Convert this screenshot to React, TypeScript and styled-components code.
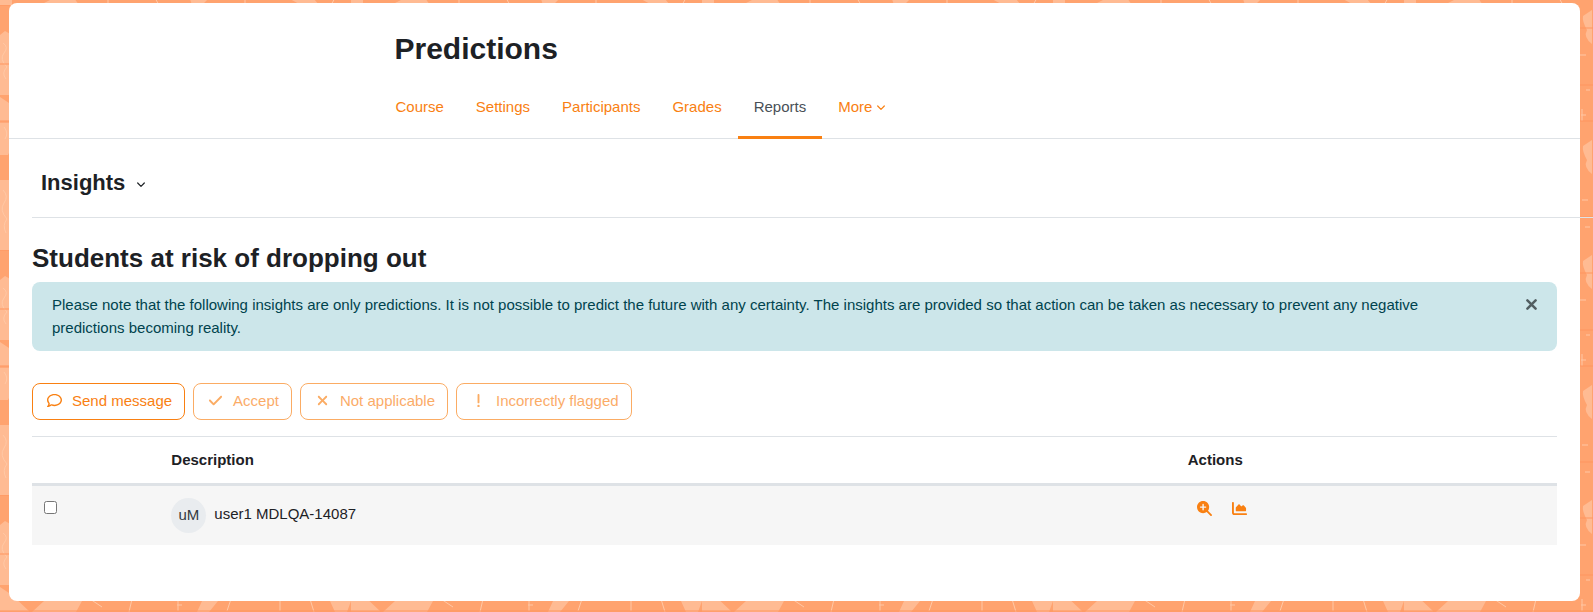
import React from "react";
import styled, { createGlobalStyle, css } from "styled-components";
import { FaRegComment, FaCheck, FaXmark, FaExclamation, FaMagnifyingGlassPlus, FaChartArea } from "react-icons/fa6";

const ORANGE = "#f98012";
const INK = "#1d2125";
const LINE = "#dee2e6";

const GlobalStyle = createGlobalStyle`
  *, *::before, *::after { box-sizing: border-box; }
  body {
    margin: 0;
    overflow-x: hidden;
    background: #ffa36f;
    color: ${INK};
    font-family: "Liberation Sans", Arial, sans-serif;
    font-size: 15px;
    line-height: 23px;
  }
  h1, h2, p { margin: 0; font-weight: 700; }
`;

const Page = styled.div`
  position: relative;
  min-height: 100vh;
  padding: 3px 13px 11px 9px;
  display: flex;
  isolation: isolate;
  overflow: hidden;
`;

const Backdrop = styled.svg`
  position: absolute;
  inset: 0;
  width: 100%;
  height: 100%;
  z-index: -1;
`;

const Card = styled.main`
  flex: 1;
  min-width: 0;
  border-radius: 8px;
  background: #fff;
`;

const Centered = styled.div`
  width: 100%;
  max-width: 832px;
  margin: 0 auto;
  padding: 0 16px;
`;

const Header = styled.header`
  border-bottom: 1px solid ${LINE};
`;

const Title = styled.h1`
  padding: 28px 0 25px;
  font-size: 30px;
  line-height: 36px;
`;

const Tabs = styled.nav`
  display: flex;
  margin: 0 -15px -1px;
`;

const Tab = styled.a<{ $active?: boolean }>`
  display: flex;
  align-items: center;
  gap: 5px;
  height: 47px;
  padding: 0 16px 16px;
  color: ${(p) => (p.$active ? "#495057" : ORANGE)};
  border-bottom: 3px solid ${(p) => (p.$active ? ORANGE : "transparent")};
  text-decoration: none;
  svg { margin-top: 4px; }
`;

const Content = styled.div`
  padding: 24px 23px 48px;
`;

const SectionBar = styled.div`
  display: flex;
  margin-right: -40px;
  padding: 0 9px 15px;
  border-bottom: 1px solid ${LINE};
`;

const SectionToggle = styled.button`
  display: flex;
  align-items: center;
  gap: 12px;
  height: 39px;
  padding: 0;
  border: 0;
  background: none;
  color: ${INK};
  font: 700 22px/28px "Liberation Sans", Arial, sans-serif;
  cursor: pointer;
  svg { margin-top: 4px; }
`;

const Heading = styled.h2`
  padding: 24px 0 8px;
  font-size: 26px;
  line-height: 32px;
`;

const Notice = styled.div`
  display: flex;
  align-items: flex-start;
  padding: 11px 20px 12px;
  border-radius: 8px;
  background: #cce6ea;
  color: #00434e;
`;

const NoticeText = styled.p`
  flex: 1;
  padding-right: 64px;
  font-weight: 400;
`;

const CloseButton = styled.button`
  display: flex;
  padding: 6px 0;
  border: 0;
  background: none;
  color: #525e61;
  cursor: pointer;
`;

const Toolbar = styled.div`
  display: flex;
  gap: 8px;
  padding: 32px 0 16px;
`;

const ActionButton = styled.button`
  display: flex;
  align-items: center;
  height: 37px;
  padding: 0 12px 2px;
  border: 1px solid ${ORANGE};
  border-radius: 8px;
  background: #fff;
  color: ${ORANGE};
  font: 400 15px/23px "Liberation Sans", Arial, sans-serif;
  cursor: pointer;
  &:disabled { opacity: 0.65; cursor: default; }
`;

const IconSlot = styled.span`
  display: flex;
  justify-content: center;
  width: 19px;
  margin-right: 8px;
`;

const Table = styled.table`
  width: 100%;
  border-collapse: separate;
  border-spacing: 0;
  table-layout: fixed;
`;

const cell = css`
  padding: 12px;
  text-align: left;
  vertical-align: top;
`;

const HeadCell = styled.th<{ $width?: string }>`
  ${cell}
  width: ${(p) => p.$width ?? "auto"};
  padding-top: 11px;
  border-top: 1px solid ${LINE};
  border-bottom: 3px solid ${LINE};
`;

const Cell = styled.td`
  ${cell}
  background: #f6f6f6;
`;

const Checkbox = styled.input`
  display: block;
  width: 13px;
  height: 13px;
  margin: 3px 0 0;
`;

const User = styled.div`
  display: flex;
  gap: 8px;
  line-height: 32px;
`;

const Avatar = styled.span`
  width: 35px;
  height: 35px;
  border-radius: 50%;
  background: #e9ecef;
  color: #343a40;
  line-height: 34px;
  text-align: center;
`;

const RowActions = styled.div`
  display: flex;
  gap: 20px;
  padding: 3px 0 0 9px;
`;

const IconLink = styled.a`
  display: flex;
  color: ${ORANGE};
`;

const Chevron = () => (
  <svg width="8" height="6" viewBox="0 0 8 6" fill="none" stroke="currentColor" strokeWidth="1.2" strokeLinecap="round" strokeLinejoin="round" aria-hidden="true">
    <path d="M.7 1L4 4.4 7.3 1" />
  </svg>
);

const Cross = () => (
  <svg width="11" height="11" viewBox="0 0 11 11" stroke="currentColor" strokeWidth="2.5" strokeLinecap="round" aria-hidden="true">
    <path d="M1.4 1.4l8.2 8.2M9.6 1.4L1.4 9.6" />
  </svg>
);

const Texture = () => (
  <Backdrop aria-hidden="true">
    <defs>
      <pattern id="leaves" width="351" height="245" patternUnits="userSpaceOnUse" y="5">
        <rect width="351" height="245" fill="#ffa36f" />
        <g fill="#ffbb93">
          <path d="M0 30l5-4 7 4v60H0zM0 117h12v25l-4 8H0zM0 175h12v70H0z" />
          <path d="M0 92l12 8 18 17H0zM57 106h7l-5 6zM202 106h16l-9 11h-12zM330 106h21l-4 11h-12zM44 106h38l-6 11H32z" />
          <path d="M188 135v34q-9-7-5-14-5-9-4-14zM188 5v34q-9-7-5-14-5-9-4-14z" />
          <path d="M50 240l24-2 5 7H40zM190 239h18l-6 6h-10zM290 239h24l5 6h-18z" />
        </g>
        <g fill="none" stroke="#ffc8a5">
          <path d="M132 104l-3 13M178 104v12M231 104l-4 12M280 104v12M310 104l4 13M90 104l12 8" />
          <path d="M108 238v7M155 238l4 7M245 238v7M335 238l-4 7" />
          <path d="M3 38q6 4 1 10t3 14q-6 6-1 12M4 122q5 6 1 12M3 185q6 6 1 13t3 16q-5 6-1 14" />
          <path d="M176 50h6M182 85h4M177 110h5M178 195h6M181 222h5" />
        </g>
        <path d="M0 59h12M0 0h12M0 117h30M174 23h16M174 80h16M174 212h16M0 116h351" stroke="#ff965f" />
      </pattern>
    </defs>
    <rect width="100%" height="100%" fill="url(#leaves)" />
  </Backdrop>
);

const tabs = ["Course", "Settings", "Participants", "Grades", "Reports"];

const actions = [
  { label: "Send message", icon: <FaRegComment size={15} />, enabled: true },
  { label: "Accept", icon: <FaCheck size={15} /> },
  { label: "Not applicable", icon: <FaXmark size={15} /> },
  { label: "Incorrectly flagged", icon: <FaExclamation size={15} /> },
];

export default function App() {
  return (
    <>
      <GlobalStyle />
      <Page>
        <Texture />
        <Card>
          <Header>
            <Centered>
              <Title>Predictions</Title>
              <Tabs aria-label="Course">
                {tabs.map((t) => (
                  <Tab key={t} href="#" $active={t === "Reports"} aria-current={t === "Reports" ? "page" : undefined}>{t}</Tab>
                ))}
                <Tab href="#">More <Chevron /></Tab>
              </Tabs>
            </Centered>
          </Header>
          <Content>
            <SectionBar>
              <SectionToggle type="button">Insights <Chevron /></SectionToggle>
            </SectionBar>
            <Heading>Students at risk of dropping out</Heading>
            <Notice role="alert">
              <NoticeText>
                Please note that the following insights are only predictions. It is not possible to predict the future with any certainty. The insights are provided so that action can be taken as necessary to prevent any negative predictions becoming reality.
              </NoticeText>
              <CloseButton type="button" aria-label="Dismiss"><Cross /></CloseButton>
            </Notice>
            <Toolbar>
              {actions.map((a) => (
                <ActionButton key={a.label} type="button" disabled={!a.enabled}>
                  <IconSlot>{a.icon}</IconSlot>
                  {a.label}
                </ActionButton>
              ))}
            </Toolbar>
            <Table>
              <thead>
                <tr>
                  <HeadCell $width="8.35%" scope="col" aria-label="Select" />
                  <HeadCell scope="col">Description</HeadCell>
                  <HeadCell $width="25%" scope="col">Actions</HeadCell>
                </tr>
              </thead>
              <tbody>
                <tr>
                  <Cell><Checkbox type="checkbox" aria-label="Select user1 MDLQA-14087" /></Cell>
                  <Cell>
                    <User><Avatar>uM</Avatar>user1 MDLQA-14087</User>
                  </Cell>
                  <Cell>
                    <RowActions>
                      <IconLink href="#" aria-label="View details"><FaMagnifyingGlassPlus size={15} /></IconLink>
                      <IconLink href="#" aria-label="Outline report"><FaChartArea size={15} /></IconLink>
                    </RowActions>
                  </Cell>
                </tr>
              </tbody>
            </Table>
          </Content>
        </Card>
      </Page>
    </>
  );
}
